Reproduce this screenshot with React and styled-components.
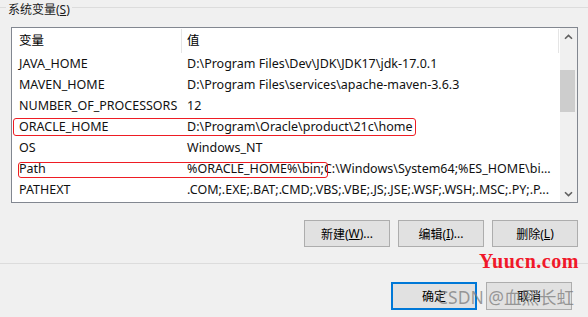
import React from 'react';
import styled, { createGlobalStyle } from 'styled-components';

const GlobalStyle = createGlobalStyle`
  html, body { margin: 0; padding: 0; background: #f0f0f0; }
  body {
    font-family: "Noto Sans", "Noto Sans CJK SC", sans-serif;
    font-size: 12.5px;
    color: #000;
  }
`;

const Dialog = styled.div`
  position: relative;
  width: 588px;
  height: 317px;
  overflow: hidden;
  background: #f0f0f0;
  padding-top: 7px;
  box-sizing: border-box;
`;

const GroupBox = styled.section`
  display: flex;
  flex-direction: column;
  border-top: 1px solid #dcdcdc;
  border-bottom: 1px solid #dcdcdc;
  padding: 0 10px 16px 11px;
`;

const GroupTitle = styled.div`
  align-self: flex-start;
  margin: -6px 0 0 -5px;
  padding: 0 2px;
  height: 16px;
  line-height: 16px;
  font-size: 12px;
  background: #f0f0f0;
  color: #1a1a1a;
  white-space: nowrap;
`;

const ListBox = styled.div`
  margin-top: 9px;
  height: 176px;
  box-sizing: border-box;
  border: 1px solid #828790;
  background: #fff;
  display: flex;
  overflow: hidden;
`;

const Table = styled.div`
  flex: 1;
  min-width: 0;
  display: flex;
  flex-direction: column;
`;

const HeaderRow = styled.div`
  display: grid;
  grid-template-columns: 170px 377px 1fr;
  height: 25px;
  align-items: center;
`;

const HeaderCell = styled.div`
  height: 24px;
  line-height: 24px;
  padding-left: ${p => p.$pad}px;
  border-right: 1px solid #e5e5e5;
  box-sizing: border-box;
  white-space: nowrap;
`;

const Row = styled.div`
  position: relative;
  display: grid;
  grid-template-columns: 170px 1fr;
  height: 21px;
  line-height: 21px;
`;

const Cell = styled.div`
  padding-left: ${p => p.$pad}px;
  white-space: nowrap;
  overflow: hidden;
  color: #111;
`;

const Highlight = styled.div`
  position: absolute;
  left: ${p => p.$left}px;
  top: ${p => p.$top}px;
  width: ${p => p.$width}px;
  height: ${p => p.$height}px;
  box-sizing: border-box;
  border: 1px solid #ee1d24;
  border-radius: 3px;
  pointer-events: none;
`;

const ScrollBar = styled.div`
  width: 17px;
  flex: none;
  background: #f0f0f0;
  display: flex;
  flex-direction: column;
`;

const ArrowBox = styled.div`
  height: 17px;
  flex: none;
  display: flex;
  align-items: center;
  justify-content: center;
`;

const Track = styled.div`
  flex: 1;
  padding-top: 25px;
`;

const Thumb = styled.div`
  width: 15px;
  height: 42px;
  background: #cdcdcd;
`;

const ButtonRow = styled.div`
  display: flex;
  justify-content: flex-end;
  gap: ${p => p.$gap}px;
  margin-top: ${p => p.$top || 0}px;
  padding-right: ${p => p.$right || 0}px;
`;

const Button = styled.div`
  width: 86px;
  height: ${p => p.$h}px;
  box-sizing: border-box;
  display: flex;
  align-items: center;
  justify-content: center;
  background: #e1e1e1;
  border: ${p => (p.$primary ? '2px solid #0078d7' : '1px solid #adadad')};
  color: #000;
  font-size: 12px;
  white-space: nowrap;
`;

const Footer = styled.div`
  padding-top: 18px;
`;

const SiteMark = styled.div`
  position: absolute;
  left: 479px;
  top: 251px;
  font-family: "Liberation Serif", serif;
  font-weight: bold;
  font-size: 20px;
  line-height: 20px;
  letter-spacing: 0.5px;
  color: #f0182a;
  white-space: nowrap;
`;

const Watermark = styled.div`
  position: absolute;
  left: 437px;
  top: 286px;
  font-family: "Noto Sans", "Noto Sans CJK SC", sans-serif;
  font-size: 17.5px;
  line-height: 22px;
  color: rgba(120, 120, 120, 0.72);
  white-space: nowrap;
`;

const Chevron = ({ down }) => (
  <svg width="9" height="6" viewBox="0 0 9 6">
    <path
      d={down ? 'M1 1.2 L4.5 4.6 L8 1.2' : 'M1 4.8 L4.5 1.4 L8 4.8'}
      fill="none"
      stroke="#606060"
      strokeWidth="1.6"
    />
  </svg>
);

const rows = [
  { name: 'JAVA_HOME', value: 'D:\\Program Files\\Dev\\JDK\\JDK17\\jdk-17.0.1' },
  { name: 'MAVEN_HOME', value: 'D:\\Program Files\\services\\apache-maven-3.6.3' },
  { name: 'NUMBER_OF_PROCESSORS', value: '12' },
  {
    name: 'ORACLE_HOME',
    value: 'D:\\Program\\Oracle\\product\\21c\\home',
    mark: { left: 1, top: 2, width: 403, height: 18 },
  },
  { name: 'OS', value: 'Windows_NT' },
  {
    name: 'Path',
    value: '%ORACLE_HOME%\\bin;C:\\Windows\\System64;%ES_HOME\\bi...',
    mark: { left: 6, top: 4, width: 310, height: 16 },
  },
  { name: 'PATHEXT', value: '.COM;.EXE;.BAT;.CMD;.VBS;.VBE;.JS;.JSE;.WSF;.WSH;.MSC;.PY;.P...' },
];

export default function App() {
  return (
    <>
      <GlobalStyle />
      <Dialog>
        <GroupBox>
          <GroupTitle>
            系统变量(<u>S</u>)
          </GroupTitle>
          <ListBox>
            <Table>
              <HeaderRow>
                <HeaderCell $pad={7}>变量</HeaderCell>
                <HeaderCell $pad={5}>值</HeaderCell>
              </HeaderRow>
              {rows.map(r => (
                <Row key={r.name}>
                  <Cell $pad={7}>{r.name}</Cell>
                  <Cell $pad={5}>{r.value}</Cell>
                  {r.mark && (
                    <Highlight
                      $left={r.mark.left}
                      $top={r.mark.top}
                      $width={r.mark.width}
                      $height={r.mark.height}
                    />
                  )}
                </Row>
              ))}
            </Table>
            <ScrollBar>
              <ArrowBox>
                <Chevron />
              </ArrowBox>
              <Track>
                <Thumb />
              </Track>
              <ArrowBox>
                <Chevron down />
              </ArrowBox>
            </ScrollBar>
          </ListBox>
          <ButtonRow $gap={8} $top={17}>
            <Button $h={27}>
              新建(<u>W</u>)...
            </Button>
            <Button $h={27}>
              编辑(<u>I</u>)...
            </Button>
            <Button $h={27}>
              删除(<u>L</u>)
            </Button>
          </ButtonRow>
        </GroupBox>
        <Footer>
          <ButtonRow $gap={9} $right={16}>
            <Button $h={28} $primary>
              确定
            </Button>
            <Button $h={28}>取消</Button>
          </ButtonRow>
        </Footer>
        <SiteMark>Yuucn.com</SiteMark>
        <Watermark>CSDN @血熙长虹</Watermark>
      </Dialog>
    </>
  );
}
